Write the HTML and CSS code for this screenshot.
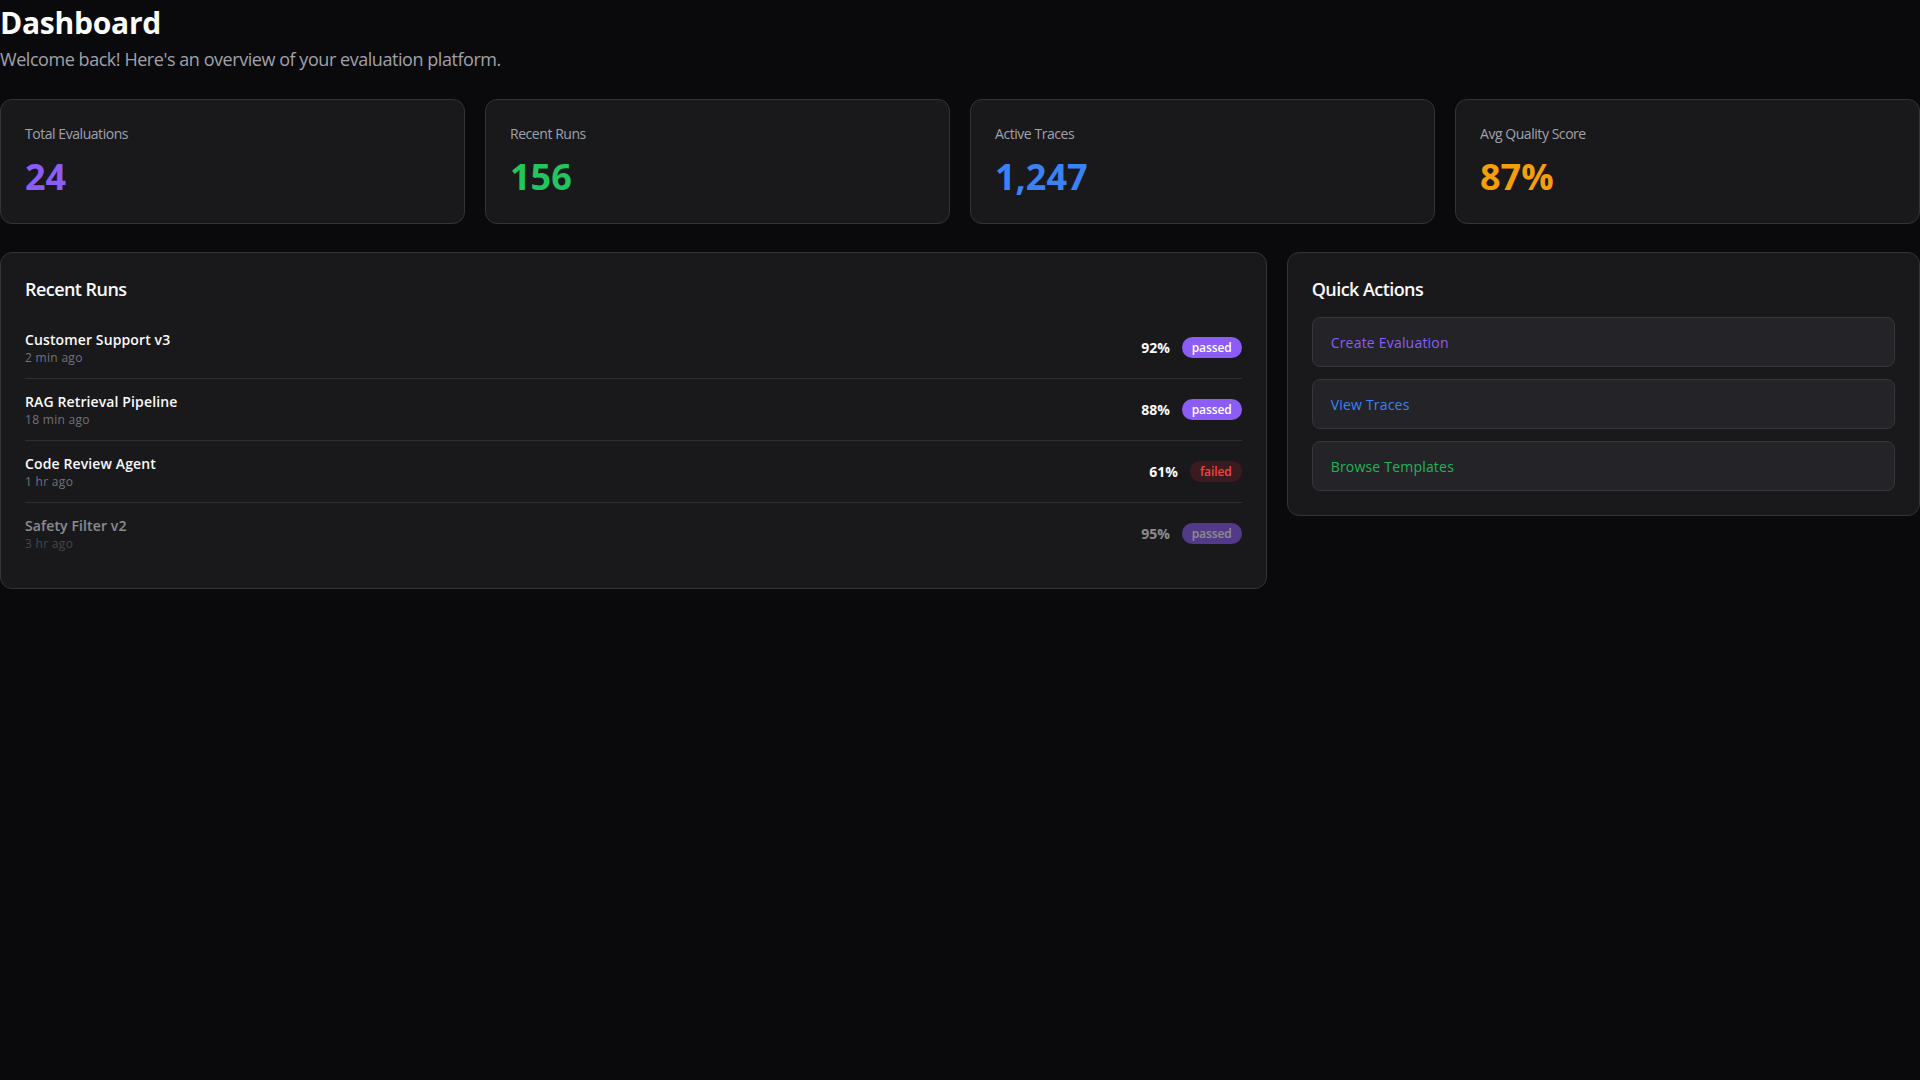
FILE: index.html
```html
<!DOCTYPE html>
<html lang="en">
<head>
<meta charset="utf-8">
<title>Dashboard</title>
<link rel="stylesheet" href="styles.css">
</head>
<body>
<main class="page">
  <header class="header">
    <h1 class="title">Dashboard</h1>
    <p class="subtitle">Welcome back! Here's an overview of your evaluation platform.</p>
  </header>

  <section class="stats">
    <div class="stat card">
      <div class="stat-label">Total Evaluations</div>
      <div class="stat-value violet">24</div>
    </div>
    <div class="stat card">
      <div class="stat-label">Recent Runs</div>
      <div class="stat-value green">156</div>
    </div>
    <div class="stat card">
      <div class="stat-label">Active Traces</div>
      <div class="stat-value blue">1,247</div>
    </div>
    <div class="stat card">
      <div class="stat-label">Avg Quality Score</div>
      <div class="stat-value orange">87%</div>
    </div>
  </section>

  <section class="grid">
    <div class="card panel">
      <h2 class="panel-title">Recent Runs</h2>
      <ul class="runs">
        <li class="run">
          <div class="run-info">
            <div class="run-name">Customer Support v3</div>
            <div class="run-time">2 min ago</div>
          </div>
          <div class="run-meta">
            <span class="run-score">92%</span>
            <span class="badge passed">passed</span>
          </div>
        </li>
        <li class="run">
          <div class="run-info">
            <div class="run-name">RAG Retrieval Pipeline</div>
            <div class="run-time">18 min ago</div>
          </div>
          <div class="run-meta">
            <span class="run-score">88%</span>
            <span class="badge passed">passed</span>
          </div>
        </li>
        <li class="run">
          <div class="run-info">
            <div class="run-name">Code Review Agent</div>
            <div class="run-time">1 hr ago</div>
          </div>
          <div class="run-meta">
            <span class="run-score">61%</span>
            <span class="badge failed">failed</span>
          </div>
        </li>
        <li class="run faded">
          <div class="run-info">
            <div class="run-name">Safety Filter v2</div>
            <div class="run-time">3 hr ago</div>
          </div>
          <div class="run-meta">
            <span class="run-score">95%</span>
            <span class="badge passed">passed</span>
          </div>
        </li>
      </ul>
    </div>

    <div class="card panel">
      <h2 class="panel-title">Quick Actions</h2>
      <div class="actions">
        <button class="action violet">Create Evaluation</button>
        <button class="action blue">View Traces</button>
        <button class="action green">Browse Templates</button>
      </div>
    </div>
  </section>
</main>
</body>
</html>
```

FILE: styles.css
```css
* {
  box-sizing: border-box;
}

html, body {
  margin: 0;
  padding: 0;
  background: #0a0a0c;
}

body {
  font-family: "Open Sans", "Noto Sans", "Liberation Sans", sans-serif;
  color: #fafafa;
  min-height: 1080px;
}

.page {
  width: 1920px;
}

.header {
  margin-bottom: 26px;
}

.title {
  margin: 0;
  font-size: 30px;
  line-height: 46px;
  font-weight: 700;
  color: #ffffff;
  letter-spacing: -0.25px;
}

.subtitle {
  margin: -1px 0 0;
  font-size: 18px;
  line-height: 28px;
  color: #a1a1aa;
  letter-spacing: -0.45px;
}

.card {
  background: #19191c;
  border: 1px solid #333338;
  border-radius: 12px;
}

.stats {
  display: grid;
  grid-template-columns: repeat(4, 1fr);
  gap: 20px;
  margin-bottom: 28px;
}

.stat {
  padding: 24px;
  height: 125px;
}

.stat-label {
  font-size: 14px;
  line-height: 20px;
  color: #a1a1aa;
  margin-bottom: 11px;
  letter-spacing: -0.45px;
}

.stat-value {
  font-size: 36px;
  line-height: 44px;
  font-weight: 700;
}

.violet { color: #8b5cf6; }
.green { color: #22c55e; }
.blue { color: #3b82f6; }
.orange { color: #f59e0b; }

.grid {
  display: grid;
  grid-template-columns: 2fr 1fr;
  gap: 20px;
  align-items: start;
}

.panel {
  padding: 24px;
}

.panel-title {
  margin: -2px 0 14px;
  font-size: 18px;
  line-height: 28px;
  font-weight: 600;
  color: #fafafa;
  letter-spacing: -0.55px;
}

.runs {
  list-style: none;
  margin: 0;
  padding: 0;
}

.run {
  display: flex;
  align-items: center;
  justify-content: space-between;
  padding: 12px 0;
  border-bottom: 1px solid #2e2e33;
}

.run:last-child {
  border-bottom: none;
}

.run.faded {
  opacity: 0.5;
}

.run-name {
  font-size: 14px;
  line-height: 21px;
  font-weight: 600;
  color: #fafafa;
  letter-spacing: 0.12px;
}

.run-time {
  font-size: 12px;
  line-height: 16px;
  color: #71717a;
  letter-spacing: 0.3px;
}

.run-meta {
  display: flex;
  align-items: center;
  gap: 12px;
}

.run-score {
  font-size: 14px;
  font-weight: 700;
  color: #fafafa;
}

.badge {
  display: inline-flex;
  align-items: center;
  height: 21px;
  padding: 0 10px;
  border-radius: 999px;
  font-size: 12px;
  font-weight: 600;
  letter-spacing: -0.1px;
}

.badge.passed {
  background: #8b5cf6;
  color: #ffffff;
}

.badge.failed {
  background: #3a1c20;
  color: #ef4444;
}

.actions {
  display: flex;
  flex-direction: column;
  gap: 12px;
}

.action {
  display: block;
  width: 100%;
  height: 50px;
  padding: 0 18px;
  text-align: left;
  background: #242428;
  border: 1px solid #36363b;
  border-radius: 8px;
  font-family: inherit;
  font-size: 14px;
  font-weight: 500;
  letter-spacing: 0.2px;
  cursor: pointer;
}

.action.green {
  color: #22b455;
}
```
